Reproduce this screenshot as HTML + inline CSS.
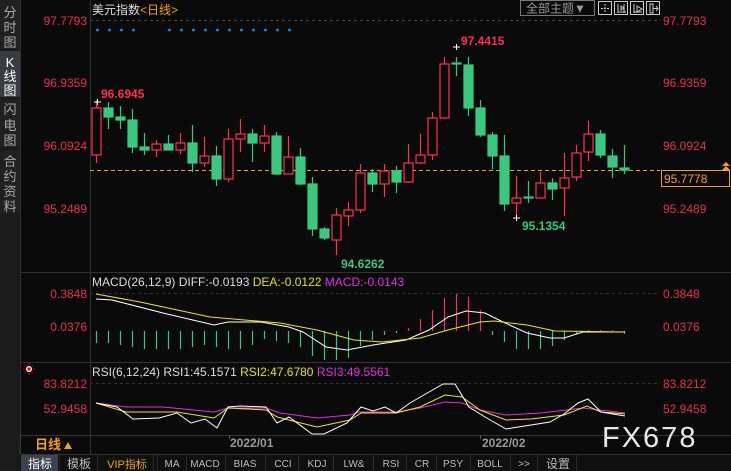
<!DOCTYPE html>
<html><head><meta charset="utf-8"><style>
html,body{margin:0;padding:0;background:#0a0a0a;width:731px;height:471px;overflow:hidden}
svg{display:block}
text{font-family:"Liberation Sans","Noto Sans CJK SC",sans-serif}
</style></head><body>
<svg width="731" height="471" viewBox="0 0 731 471" xmlns="http://www.w3.org/2000/svg">
<rect width="731" height="471" fill="#0a0a0a"/>
<!-- sidebar -->
<rect x="0" y="0" width="20" height="471" fill="#1a1a1a"/>
<rect x="0" y="0" width="20" height="49" fill="#202020"/>
<rect x="0" y="51" width="20" height="46" fill="#3a3c44"/>
<rect x="0" y="99" width="20" height="48" fill="#202020"/>
<rect x="0" y="150" width="20" height="63" fill="#202020"/>
<g fill="#aaa" font-size="13" text-anchor="middle">
<text x="10" y="17">分</text><text x="10" y="32">时</text><text x="10" y="47">图</text>
<text x="10" y="67" fill="#fff" font-family="Liberation Mono">K</text><text x="10" y="81" fill="#fff">线</text><text x="10" y="95" fill="#fff">图</text>
<text x="10" y="114">闪</text><text x="10" y="130">电</text><text x="10" y="145">图</text>
<text x="10" y="166">合</text><text x="10" y="181">约</text><text x="10" y="196">资</text><text x="10" y="211">料</text>
</g>
<line x1="20.5" y1="0" x2="20.5" y2="471" stroke="#333"/>
<line x1="90.5" y1="0" x2="90.5" y2="454" stroke="#333"/>
<line x1="20" y1="272.5" x2="731" y2="272.5" stroke="#333"/>
<line x1="20" y1="362.5" x2="731" y2="362.5" stroke="#333"/>
<line x1="20" y1="435.5" x2="731" y2="435.5" stroke="#333"/>
<line x1="20" y1="454.5" x2="731" y2="454.5" stroke="#333"/>
<!-- header -->
<text x="92" y="14" font-size="12" fill="#ddd">美元指数<tspan fill="#f0a020">&lt;日线&gt;</tspan></text>
<rect x="520.5" y="0.5" width="74" height="15" fill="none" stroke="#777"/>
<text x="526" y="12.5" font-size="12" fill="#999">全部主题▼</text>
<g fill="none" stroke="#ccc">
<rect x="598.5" y="1.5" width="13" height="13"/><rect x="614.5" y="1.5" width="13" height="13"/><rect x="630.5" y="1.5" width="13" height="13"/><rect x="646.5" y="1.5" width="13" height="13"/>
<path d="M605 4v9M601 8.5h9" stroke-dasharray="2 1"/>
<path d="M618 4v9M624 4v9M618 12h8M624 8l-3-2v4z"/>
<path d="M634 4v9M634 12h8M637 6l5 3-5 3z"/>
<path d="M650 4v9h3V4zM653 8.5h5M656 6l2 2.5-2 2.5"/>
</g>
<!-- axis labels -->
<g font-size="12" fill="#e8334a">
<text x="87" y="25" text-anchor="end">97.7793</text>
<text x="87" y="87" text-anchor="end">96.9359</text>
<text x="87" y="150" text-anchor="end">96.0924</text>
<text x="87" y="213" text-anchor="end">95.2489</text>
<text x="663" y="25">97.7793</text>
<text x="663" y="87">96.9359</text>
<text x="663" y="150">96.0924</text>
<text x="663" y="213">95.2489</text>
<text x="87" y="298" text-anchor="end">0.3848</text>
<text x="87" y="331" text-anchor="end">0.0376</text>
<text x="663" y="298">0.3848</text>
<text x="663" y="331">0.0376</text>
<text x="87" y="388" text-anchor="end">83.8212</text>
<text x="87" y="413" text-anchor="end">52.9458</text>
<text x="663" y="388">83.8212</text>
<text x="663" y="413">52.9458</text>
</g>
<line x1="90" y1="20.5" x2="660" y2="20.5" stroke="#444" stroke-dasharray="3 3"/>
<line x1="90" y1="293.5" x2="660" y2="293.5" stroke="#333" stroke-dasharray="3 3"/>
<line x1="90" y1="383.5" x2="660" y2="383.5" stroke="#333" stroke-dasharray="3 3"/>
<line x1="660.5" y1="20" x2="660.5" y2="435" stroke="#222" stroke-dasharray="1 20"/>
<!-- blue dots -->
<g fill="#1a7fd0">
<circle cx="97.5" cy="30" r="1.5"/><circle cx="109.5" cy="30" r="1.5"/><circle cx="121.5" cy="30" r="1.5"/><circle cx="133.5" cy="30" r="1.5"/>
<circle cx="169.5" cy="30" r="1.5"/><circle cx="181.5" cy="30" r="1.5"/><circle cx="193.5" cy="30" r="1.5"/><circle cx="205.5" cy="30" r="1.5"/><circle cx="217.5" cy="30" r="1.5"/><circle cx="229.5" cy="30" r="1.5"/><circle cx="241.5" cy="30" r="1.5"/><circle cx="253.5" cy="30" r="1.5"/><circle cx="265.5" cy="30" r="1.5"/><circle cx="277.5" cy="30" r="1.5"/><circle cx="289.5" cy="30" r="1.5"/>
</g>
<!-- current price -->
<line x1="90" y1="170.5" x2="660" y2="170.5" stroke="#f0a030" stroke-dasharray="4 3"/>
<rect x="661.5" y="170.5" width="68" height="16" fill="#0a0a0a" stroke="#f0a030"/>
<text x="664" y="183" font-size="12" fill="#f0a030">95.7778</text>
<path d="M722 166l4-4 4 4zM722 170l4-4 4 4z" fill="#f0a030"/>
<!-- candles -->
<g id="c"></g>
<g stroke-width="1.2">
<!-- green candles: filled -->
<g fill="#39c97e" stroke="#39c97e">
<path d="M108.5 102v27M120.5 106v23M132.5 109v44M144.5 133v22M168.5 135v15M192.5 125v47M216.5 146v40M252.5 129v33M276.5 132v43M300.5 148v37M312.5 177v59M324.5 227v13M372.5 169v23M396.5 166v27M456.5 57v19M468.5 57v59M480.5 100v37M492.5 132v37M504.5 135v76M528.5 181v22M552.5 178v22M600.5 130v28M612.5 149v29M624.5 145v29"/>
<rect x="104" y="108" width="9" height="9"/><rect x="116" y="117" width="9" height="3"/><rect x="128" y="120" width="9" height="27"/><rect x="140" y="147" width="9" height="3"/><rect x="164" y="144" width="9" height="6"/><rect x="188" y="143" width="9" height="20"/><rect x="212" y="156" width="9" height="23"/><rect x="248" y="134" width="9" height="9"/><rect x="272" y="136" width="9" height="38"/><rect x="296" y="157" width="9" height="27"/><rect x="308" y="184" width="9" height="45"/><rect x="320" y="229" width="9" height="9"/><rect x="368" y="173" width="9" height="11"/><rect x="392" y="171" width="9" height="11"/><rect x="452" y="63" width="9" height="1"/><rect x="464" y="65" width="9" height="43"/><rect x="476" y="108" width="9" height="27"/><rect x="488" y="135" width="9" height="21"/><rect x="500" y="156" width="9" height="48"/><rect x="524" y="197" width="9" height="1"/><rect x="548" y="183" width="9" height="6"/><rect x="596" y="134" width="9" height="21"/><rect x="608" y="156" width="9" height="11"/><rect x="620" y="168" width="9" height="2"/>
</g>
<g fill="#0a0a0a" stroke="#ff3050">
<path d="M96.5 100v63M156.5 140v17M180.5 133v21M204.5 137v30M228.5 129v53M240.5 119v33M264.5 125v27M288.5 136v38M336.5 208v47M348.5 202v24M360.5 164v49M384.5 164v33M408.5 144v39M420.5 134v30M432.5 112v48M444.5 57v62M516.5 176v42M540.5 172v26M564.5 153v63M576.5 145v36M588.5 121v40"/>
<rect x="92" y="108" width="9" height="47"/><rect x="152" y="144" width="9" height="6"/><rect x="176" y="143" width="9" height="7"/><rect x="200" y="156" width="9" height="7"/><rect x="224" y="139" width="9" height="40"/><rect x="236" y="134" width="9" height="5"/><rect x="260" y="136" width="9" height="7"/><rect x="284" y="157" width="9" height="17"/><rect x="332" y="215" width="9" height="25"/><rect x="344" y="210" width="9" height="6"/><rect x="356" y="173" width="9" height="37"/><rect x="380" y="171" width="9" height="13"/><rect x="404" y="163" width="9" height="19"/><rect x="416" y="155" width="9" height="8"/><rect x="428" y="118" width="9" height="37"/><rect x="440" y="64" width="9" height="54"/><rect x="512" y="198" width="9" height="5"/><rect x="536" y="183" width="9" height="15"/><rect x="560" y="178" width="9" height="10"/><rect x="572" y="153" width="9" height="24"/><rect x="584" y="134" width="9" height="18"/>
</g>
</g>
<g stroke="#fff"><path d="M94 102h7M97.5 99v6M453 47h7M456.5 44v6M513 218h7M516.5 215v6"/></g>
<g font-size="12" font-weight="bold">
<text x="101" y="98" fill="#ff3050">96.6945</text>
<text x="461" y="45" fill="#ff3050">97.4415</text>
<text x="522" y="230" fill="#39c97e">95.1354</text>
<text x="341" y="268" fill="#39c97e">94.6262</text>
</g>
<!-- MACD -->
<text x="92" y="286" font-size="12" fill="#ddd">MACD(26,12,9) DIFF:-0.0193 <tspan fill="#e0e020">DEA:-0.0122</tspan> <tspan fill="#e030e0">MACD:-0.0143</tspan></text>
<g stroke="#39c97e" stroke-width="1.2">
<path d="M96.5 331v12M108.5 331v12M120.5 331v14M132.5 331v16M144.5 331v18M156.5 331v18M168.5 331v18M180.5 331v18M192.5 331v16M204.5 331v14M216.5 331v16M228.5 331v18M240.5 331v18M252.5 331v14M264.5 331v8M276.5 331v10M288.5 331v12M300.5 331v16M312.5 331v25M324.5 331v29M336.5 331v29M348.5 331v27M360.5 331v15M372.5 331v9M384.5 331v4M396.5 331v2M492.5 331v4M504.5 331v11M516.5 331v18M528.5 331v18M540.5 331v18M552.5 331v15M564.5 331v9M576.5 331v3M624.5 331v3"/>
</g>
<g stroke="#ff3050" stroke-width="1.2">
<path d="M408.5 331v-3M420.5 331v-12M432.5 331v-21M444.5 331v-33M456.5 331v-37M468.5 331v-34M480.5 331v-21M588.5 331v-1M600.5 331v-1M612.5 331v-1"/>
</g>
<polyline fill="none" stroke="#fff" points="96,299 112,300 163,313 214,325 228,322 261,322 289,327 303,332 326,347 347,350 373,345 406,340 429,330 448,317 466,311 485,313 503,322 527,333 550,338 564,338 583,332 625,332"/>
<polyline fill="none" stroke="#e8e820" points="96,294 140,302 210,317 280,323 317,330 354,340 382,342 420,338 448,330 480,322 494,321 527,325 555,331 625,332"/>
<!-- RSI -->
<g transform="translate(29,369)"><circle r="3" fill="#fff"/><circle r="1.7" fill="#f00"/><g stroke="#f00" stroke-width="0.8"><path d="M0-6v2M0 4v2M-6 0h2M4 0h2M-4-4l1 1M3 3l1 1M4-4l-1 1M-4 4l1-1"/></g></g>
<text x="92" y="376" font-size="12" fill="#ddd">RSI(6,12,24) RSI1:45.1571 <tspan fill="#e0e020">RSI2:47.6780</tspan> <tspan fill="#e030e0">RSI3:49.5561</tspan></text>
<polyline fill="none" stroke="#e030e0" points="96,403 126,407 163,407 214,412 228,408 266,408 280,413 317,418 350,415 359,412 396,412 420,408 445,402 462,403 480,410 506,415 541,413 583,408 625,413"/>
<polyline fill="none" stroke="#e8e820" points="96,403 126,412 177,412 214,418 228,408 266,410 277,417 317,427 350,420 361,413 396,413 420,407 445,395 462,397 480,410 506,420 531,419 564,415 587,406 601,412 625,414"/>
<polyline fill="none" stroke="#fff" points="96,403 117,407 133,419 159,418 177,413 191,423 205,419 217,428 228,407 240,406 266,407 277,423 289,417 312,434 324,434 347,423 361,407 373,411 385,407 396,413 410,403 429,392 443,384 455,384 469,407 485,417 506,429 531,425 550,422 564,414 578,403 588,399 601,412 625,416"/>
<!-- date axis -->
<text x="35" y="449" font-size="13" font-weight="bold" fill="#f0a020">日线</text>
<path d="M64 449l4-7 4 7z" fill="#f0a020"/>
<line x1="20" y1="435" x2="20" y2="454" stroke="#333"/>
<g font-size="12" font-weight="bold" fill="#999">
<text x="230" y="447">2022/01</text><text x="482" y="447">2022/02</text></g>
<line x1="229.5" y1="435" x2="229.5" y2="439" stroke="#555"/><line x1="480.5" y1="435" x2="480.5" y2="439" stroke="#555"/>
<text x="602" y="447" font-size="29" fill="#e8e8e8" letter-spacing="2">FX678</text>
<!-- tabs -->
<rect x="20" y="455" width="711" height="16" fill="#0f0f0f"/>
<rect x="21" y="455" width="37" height="16" fill="#3d4150"/>
<g font-size="11" fill="#bbb" text-anchor="middle">
<text x="40" y="468" fill="#fff" font-size="12">指标</text>
<text x="79" y="468" font-size="12">模板</text>
<text x="127" y="468" fill="#f0a020">VIP指标</text>
<text x="172" y="467" font-size="10">MA</text>
<text x="205" y="467" font-size="10">MACD</text>
<text x="245" y="467" font-size="10">BIAS</text>
<text x="283" y="467" font-size="10">CCI</text>
<text x="317" y="467" font-size="10">KDJ</text>
<text x="354" y="467" font-size="10">LW&amp;</text>
<text x="391" y="467" font-size="10">RSI</text>
<text x="422" y="467" font-size="10">CR</text>
<text x="453" y="467" font-size="10">PSY</text>
<text x="490" y="467" font-size="10">BOLL</text>
<text x="524" y="467" font-size="10">&gt;&gt;</text>
<text x="558" y="468" font-size="12">设置</text>
</g>
<g stroke="#2a2a2a"><path d="M59.5 455v16M97.5 455v16M153.5 455v16M157.5 455v16M186.5 455v16M225.5 455v16M265.5 455v16M298.5 455v16M333.5 455v16M373.5 455v16M406.5 455v16M436.5 455v16M470.5 455v16M510.5 455v16M537.5 455v16M576.5 455v16"/></g>
</svg>
</body></html>
